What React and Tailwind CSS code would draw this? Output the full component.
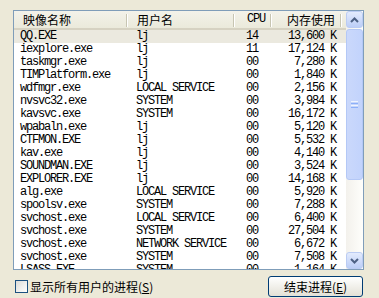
import React from "react";

const rows = [
  ["QQ.EXE", "lj", "14", "13,600 K"],
  ["iexplore.exe", "lj", "11", "17,124 K"],
  ["taskmgr.exe", "lj", "00", "7,280 K"],
  ["TIMPlatform.exe", "lj", "00", "1,840 K"],
  ["wdfmgr.exe", "LOCAL SERVICE", "00", "2,156 K"],
  ["nvsvc32.exe", "SYSTEM", "00", "3,984 K"],
  ["kavsvc.exe", "SYSTEM", "00", "16,172 K"],
  ["wpabaln.exe", "lj", "00", "5,120 K"],
  ["CTFMON.EXE", "lj", "00", "5,532 K"],
  ["kav.exe", "lj", "00", "4,140 K"],
  ["SOUNDMAN.EXE", "lj", "00", "3,524 K"],
  ["EXPLORER.EXE", "lj", "00", "14,168 K"],
  ["alg.exe", "LOCAL SERVICE", "00", "5,920 K"],
  ["spoolsv.exe", "SYSTEM", "00", "7,288 K"],
  ["svchost.exe", "LOCAL SERVICE", "00", "6,400 K"],
  ["svchost.exe", "SYSTEM", "00", "27,504 K"],
  ["svchost.exe", "NETWORK SERVICE", "00", "6,672 K"],
  ["svchost.exe", "SYSTEM", "00", "7,508 K"],
  ["LSASS.EXE", "SYSTEM", "00", "1,164 K"],
];

const cjk = "font-['Noto_Sans_CJK_SC','Noto_Sans',sans-serif]";
const mono = "font-['Liberation_Mono','DejaVu_Sans_Mono',monospace]";

function Sep() {
  return (
    <div className="absolute right-0 top-[3px] h-[13px] w-[2px] flex">
      <div className="w-px bg-[#C7C5B2]" />
      <div className="w-px bg-white" />
    </div>
  );
}

function ArrowBtn({ up }) {
  return (
    <div className="h-[17px] w-[17px] rounded-[3px] border border-[#BBCCF3] bg-gradient-to-b from-[#E3EBFD] to-[#BCCEF7] flex items-center justify-center">
      <svg width="9" height="6" viewBox="0 0 9 6">
        {up ? (
          <polyline points="1,5 4.5,1.5 8,5" fill="none" stroke="#4D6185" strokeWidth="2" />
        ) : (
          <polyline points="1,1 4.5,4.5 8,1" fill="none" stroke="#4D6185" strokeWidth="2" />
        )}
      </svg>
    </div>
  );
}

export default function App() {
  return (
    <div className="w-[379px] h-[298px] bg-[#ECE9D8] overflow-hidden pl-[13px] pt-[10px] flex flex-col">
      <div className="w-[351px] h-[260px] border border-[#7F9DB9] bg-white flex">
        <div className="w-[332px] flex flex-col overflow-hidden">
          <div className={`h-[19px] shrink-0 flex bg-gradient-to-b from-[#F3F2EA] to-[#EBEADB] border-b-[2px] border-[#D6D2C2] text-[12px] text-black ${cjk}`}>
            <div className="relative w-[114px] pl-[9px] leading-[17px]">映像名称<Sep /></div>
            <div className="relative w-[107px] pl-[9px] leading-[17px]">用户名<Sep /></div>
            <div className={`relative w-[37px] pl-[12px] leading-[17px] ${mono} text-[12px] tracking-[-1.2px]`}>CPU<Sep /></div>
            <div className="relative w-[70px] pr-[7px] text-right leading-[17px]">内存使用<Sep /></div>
            <div className="flex-1" />
          </div>
          <div className={`flex flex-col text-[12px] tracking-[-1.2px] text-black ${mono}`}>
            {rows.map((r, i) => (
              <div
                key={i}
                className={`h-[13px] shrink-0 flex leading-[13px] whitespace-nowrap ${i === 0 ? "bg-[#EBE9DF]" : ""}`}
              >
                <div className="w-[114px] pl-[6px]">{r[0]}</div>
                <div className="w-[107px] pl-[8px]">{r[1]}</div>
                <div className="w-[37px] pl-[11px]">{r[2]}</div>
                <div className="w-[70px] pr-[6px] text-right">{r[3]}</div>
              </div>
            ))}
          </div>
        </div>
        <div className="w-[17px] flex flex-col bg-gradient-to-r from-[#F3F1EC] to-[#FEFEFB]">
          <ArrowBtn up />
          <div className="mt-[1px] h-[151px] rounded-[3px] border border-[#B4C8F6] bg-gradient-to-r from-[#CAD8FB] to-[#C2D3FC] flex flex-col items-center justify-center gap-[1px]">
            <div className="w-[7px] h-px bg-[#EEF4FE]" />
            <div className="w-[7px] h-px bg-[#8CB0F8]" />
            <div className="w-[7px] h-px bg-[#EEF4FE]" />
            <div className="w-[7px] h-px bg-[#8CB0F8]" />
          </div>
          <div className="flex-1" />
          <ArrowBtn />
        </div>
      </div>
      <div className={`w-[351px] mt-[6px] h-[21px] flex items-center justify-between text-[12px] text-black ${cjk}`}>
        <div className="flex items-center ml-[2px]">
          <div className="w-[13px] h-[13px] border border-[#1C5180] bg-gradient-to-br from-[#DCDCD7] to-white" />
          <span className="ml-[2px] leading-[14px]">
            显示所有用户的进程(<span className="underline">S</span>)
          </span>
        </div>
        <div className="mr-[1px] w-[95px] h-[21px] rounded-[3px] border border-[#003C74] bg-gradient-to-b from-white to-[#E3E1D6] flex items-center justify-center leading-[14px]">
          结束进程(<span className="underline">E</span>)
        </div>
      </div>
    </div>
  );
}
